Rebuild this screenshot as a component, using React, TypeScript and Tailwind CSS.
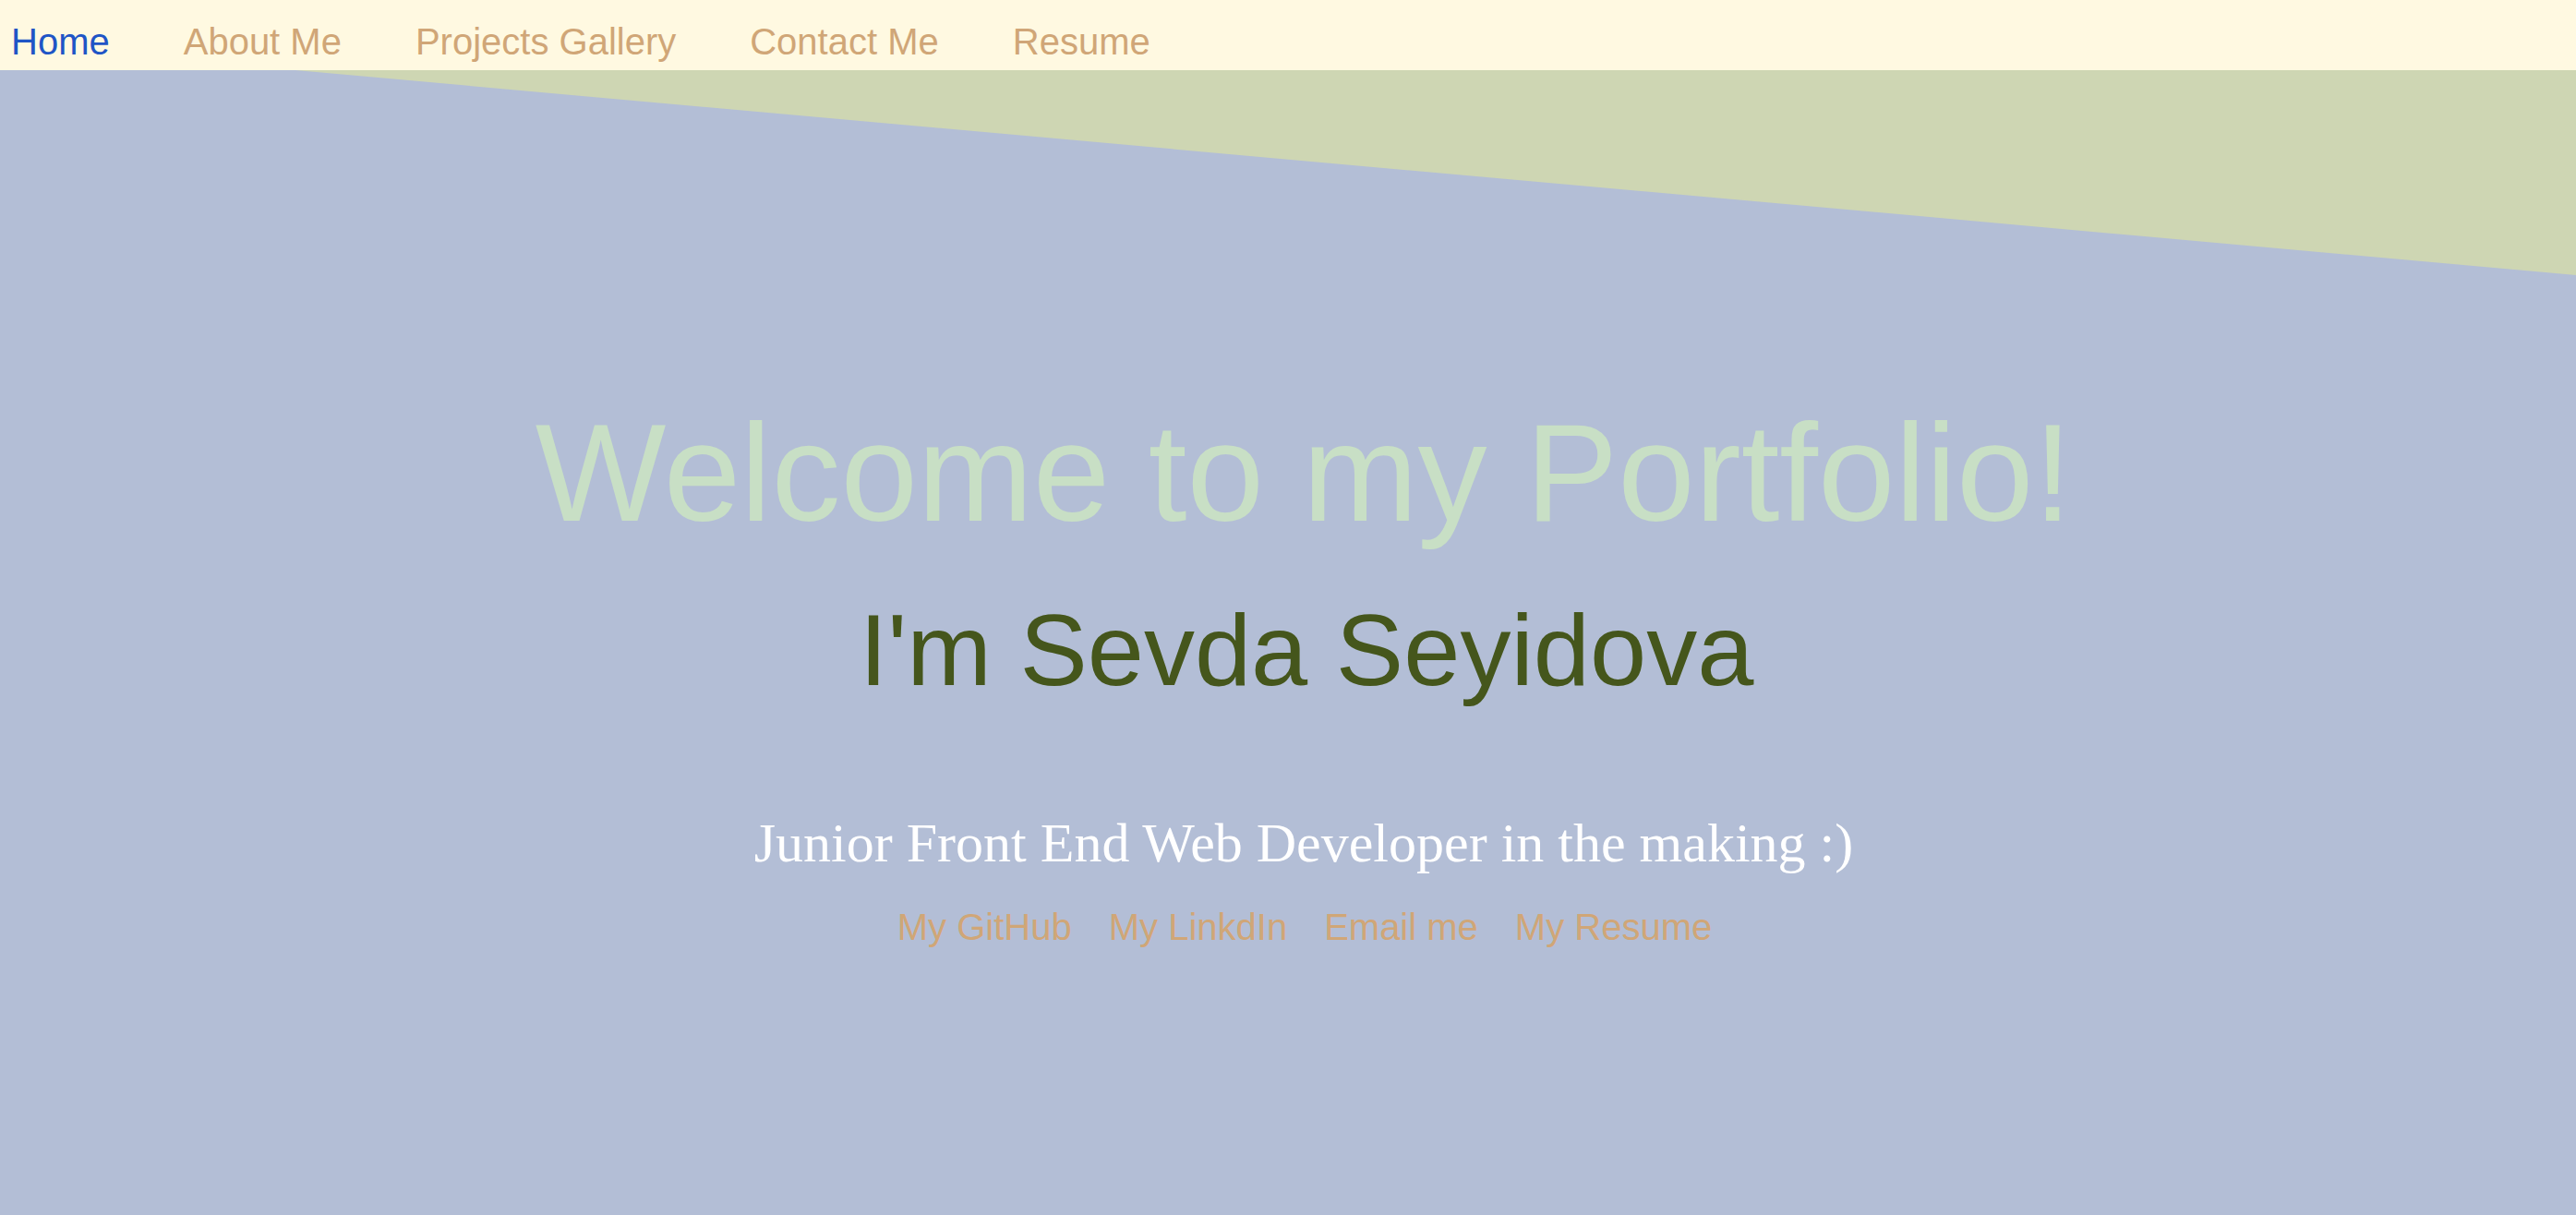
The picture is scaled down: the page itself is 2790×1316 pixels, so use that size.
export default function App() {
  const links = ["Home", "About Me", "Projects Gallery", "Contact Me", "Resume"]
  const socials = ["My GitHub", "My LinkdIn", "Email me", "My Resume"]

  return (
    <div className="min-h-screen flex flex-col bg-[#b3bed6] font-['Liberation_Sans',Arial,sans-serif]">
      <nav className="h-[76px] shrink-0 bg-[#fff9e1] flex gap-[80px] pl-[12px] pt-[23px]">
        {links.map((link, i) => (
          <a
            key={link}
            href="#"
            className={
              "text-[40px] leading-[45px] " +
              (i === 0 ? "text-[#1f55c6]" : "text-[#d0a677]")
            }
          >
            {link}
          </a>
        ))}
      </nav>

      <main className="relative flex-1 flex flex-col items-center">
        {/* slanted header band */}
        <svg
          className="absolute inset-x-0 top-0 w-full h-[230px]"
          viewBox="0 0 2790 230"
          preserveAspectRatio="none"
        >
          <polygon points="320,0 2790,0 2790,222" fill="#ced6b3" />
        </svg>

        <h1 className="relative mt-[361px] text-[150px] leading-none text-[#c8dfc5] pl-[34px]">
          Welcome to my Portfolio!
        </h1>
        <h2 className="relative mt-[62px] text-[110px] leading-none text-[#45561c] pl-[40px]">
          I'm Sevda Seyidova
        </h2>
        <p className="relative mt-[124px] text-[60px] leading-none text-white font-['Liberation_Serif','Times_New_Roman',serif] pl-[34px]">
          Junior Front End Web Developer in the making :)
        </p>
        <div className="relative mt-[41px] flex gap-[40px] pl-[36px]">
          {socials.map((s) => (
            <a key={s} href="#" className="text-[40px] leading-none text-[#d0a677]">
              {s}
            </a>
          ))}
        </div>
      </main>
    </div>
  )
}
